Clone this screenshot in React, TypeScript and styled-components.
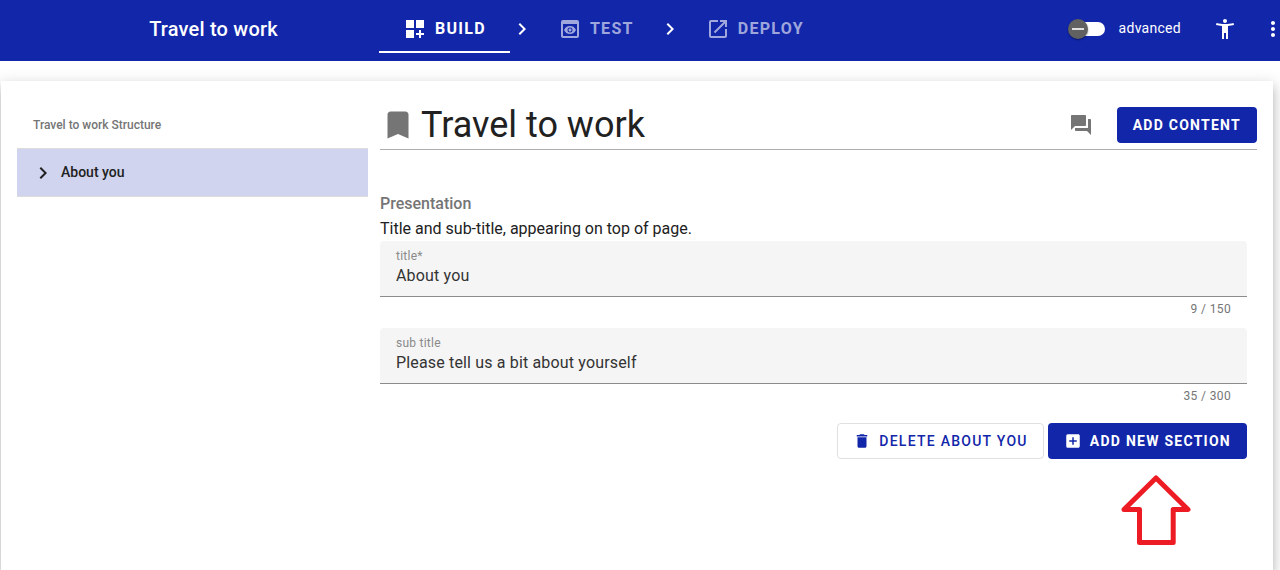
import React, { useState } from "react";
import styled, { createGlobalStyle } from "styled-components";
import {
  MdAccessibilityNew,
  MdAddBox,
  MdBookmark,
  MdChevronRight,
  MdDashboardCustomize,
  MdDelete,
  MdMoreVert,
  MdOpenInNew,
  MdPreview,
  MdQuestionAnswer,
} from "react-icons/md";

const primary = "#1226aa";
const muted = "#757575";

const GlobalStyle = createGlobalStyle`
  *, *::before, *::after { box-sizing: border-box; }
  body {
    margin: 0;
    background: #fff;
    color: #212121;
    font-family: Roboto, "Liberation Sans", sans-serif;
    font-size: 16px;
    line-height: 24px;
  }
  button, input { font-family: inherit; }
`;

const Page = styled.div`
  display: flex;
  flex-direction: column;
  min-height: 100vh;
  overflow: hidden;
`;

const TopBar = styled.header`
  display: flex;
  align-items: center;
  height: 61px;
  margin-right: -17px;
  background: ${primary};
  color: #fff;
`;

const AppTitle = styled.div`
  flex: 0 0 379px;
  padding: 0 0 4px 48px;
  font-size: 20px;
  font-weight: 500;
  letter-spacing: 0.01em;
  text-align: center;
`;

const Stages = styled.nav`
  display: flex;
  flex: 1;
  align-items: center;
  padding-bottom: 4px;
`;

const Stage = styled.button<{ $active?: boolean }>`
  display: flex;
  align-items: center;
  gap: 8px;
  height: 48px;
  margin-top: 1px;
  padding: 0 24px;
  border: 0;
  box-shadow: ${(p) => (p.$active ? "inset 0 -2px #fff" : "none")};
  background: none;
  color: ${(p) => (p.$active ? "#fff" : "rgba(255, 255, 255, 0.6)")};
  font-size: 16px;
  font-weight: 700;
  letter-spacing: 0.08em;
  text-transform: uppercase;
  cursor: pointer;
`;

const StageName = styled.span`
  padding-bottom: 2px;
`;

const SwitchLabel = styled.label`
  display: flex;
  align-items: center;
  gap: 14px;
  padding: 0 20px 5px 0;
  font-size: 14px;
  letter-spacing: 0.02em;
  cursor: pointer;
`;

const Switch = styled.input`
  appearance: none;
  display: flex;
  align-items: center;
  width: 36px;
  height: 14px;
  margin: 2px 0 0;
  border-radius: 7px;
  background: #fff;
  cursor: pointer;

  &::before {
    content: "";
    width: 20px;
    height: 20px;
    margin-left: -1px;
    border-radius: 50%;
    background: linear-gradient(#e0e0e0, #e0e0e0) center / 12px 2px no-repeat #616161;
    box-shadow: 0 1px 2px rgba(0, 0, 0, 0.4);
  }

  &:checked::before {
    margin-left: 17px;
  }
`;

const IconButton = styled.button`
  display: flex;
  align-items: center;
  justify-content: center;
  flex: none;
  width: 48px;
  height: 48px;
  padding: 0;
  border: 0;
  background: none;
  color: inherit;
  cursor: pointer;
`;

const BarActions = styled.div`
  display: flex;
  align-items: center;

  ${IconButton} {
    padding-bottom: 4px;
  }
`;

const Card = styled.main`
  display: grid;
  grid-template-columns: minmax(200px, 351px) minmax(0, 1fr);
  gap: 12px;
  flex: 1;
  margin: 20px 7px 0 1px;
  padding: 16px 16px 24px;
  background: #fff;
  box-shadow:
    0 5px 5px -3px rgba(0, 0, 0, 0.2),
    0 8px 10px 1px rgba(0, 0, 0, 0.14),
    0 3px 14px 2px rgba(0, 0, 0, 0.12);
`;

const StructureTitle = styled.h2`
  margin: 0;
  padding: 16px 16px 11px;
  color: ${muted};
  font-size: 12px;
  font-weight: 500;
`;

const StructureItem = styled.button`
  display: flex;
  align-items: center;
  gap: 6px;
  width: 100%;
  height: 49px;
  padding: 0 14px;
  border: 1px solid #dcdcdc;
  border-width: 1px 0;
  background: #d0d4ee;
  color: #212121;
  font-size: 14px;
  font-weight: 500;
  cursor: pointer;
`;

const ItemName = styled.span`
  padding-bottom: 2px;
`;

const ContentHeader = styled.div`
  display: flex;
  align-items: center;
  padding: 10px 0 6px;
  border-bottom: 1px solid #aeaeae;
`;

const PageTitle = styled.h1`
  display: flex;
  align-items: center;
  flex: 1;
  gap: 5px;
  margin: 0;
  font-size: 36px;
  font-weight: 400;
  line-height: 36px;

  svg {
    color: ${muted};
  }
`;

const HeaderActions = styled.div`
  display: flex;
  align-items: center;
  gap: 12px;
  height: 36px;
  color: ${muted};
`;

const Button = styled.button<{ $outlined?: boolean; $strong?: boolean }>`
  display: flex;
  align-items: center;
  gap: 8px;
  height: 36px;
  padding: 0 ${(p) => (p.$outlined ? "15px" : "16px")};
  border: ${(p) => (p.$outlined ? "1px solid #e0e0e0" : "0")};
  border-radius: 4px;
  background: ${(p) => (p.$outlined ? "#fff" : primary)};
  color: ${(p) => (p.$outlined ? primary : "#fff")};
  font-size: 14px;
  font-weight: ${(p) => (p.$outlined ? 500 : 700)};
  letter-spacing: 0.09em;
  text-transform: uppercase;
  white-space: nowrap;
  cursor: pointer;
`;

const Form = styled.form`
  display: flex;
  flex-direction: column;
  padding: 41px 10px 0 0;
`;

const SectionTitle = styled.h3`
  margin: 0;
  color: ${muted};
  font-size: 16px;
  font-weight: 500;
  line-height: 25px;
`;

const SectionHint = styled.p`
  margin: 0;
  line-height: 25px;
`;

const FieldBox = styled.div`
  display: flex;
  flex-direction: column;
  height: 56px;
  padding: 7px 16px 0;
  border-bottom: 1px solid #8c8c8c;
  border-radius: 4px 4px 0 0;
  background: #f5f5f5;
`;

const FieldLabel = styled.label`
  color: #8a8a8a;
  font-size: 12px;
  line-height: 16px;
  letter-spacing: 0.02em;
`;

const FieldInput = styled.input`
  width: 100%;
  height: 22px;
  padding: 0;
  border: 0;
  outline: 0;
  background: none;
  color: #333;
  font-size: 16px;
  letter-spacing: 0.01em;
`;

const Counter = styled.div`
  height: 31px;
  padding: 0 16px;
  color: ${muted};
  font-size: 12px;
  letter-spacing: 0.03em;
  text-align: right;
`;

const FormActions = styled.div`
  display: flex;
  justify-content: flex-end;
  gap: 4px;
  margin-top: 8px;
`;

const Pointer = styled.svg`
  align-self: flex-end;
  margin: 16px 56px 0 0;
`;

type FieldProps = { id: string; label: string; initial: string; max: number; required?: boolean };

function Field({ id, label, initial, max, required }: FieldProps) {
  const [value, setValue] = useState(initial);
  return (
    <div>
      <FieldBox>
        <FieldLabel htmlFor={id}>{required ? `${label}*` : label}</FieldLabel>
        <FieldInput
          id={id}
          value={value}
          maxLength={max}
          required={required}
          onChange={(e) => setValue(e.target.value)}
        />
      </FieldBox>
      <Counter>{`${value.length} / ${max}`}</Counter>
    </div>
  );
}

export default function App() {
  return (
    <>
      <GlobalStyle />
      <Page>
        <TopBar>
          <AppTitle>Travel to work</AppTitle>
          <Stages>
            <Stage $active>
              <MdDashboardCustomize size={24} />
              <StageName>Build</StageName>
            </Stage>
            <MdChevronRight size={24} />
            <Stage>
              <MdPreview size={24} />
              <StageName>Test</StageName>
            </Stage>
            <MdChevronRight size={24} />
            <Stage>
              <MdOpenInNew size={24} />
              <StageName>Deploy</StageName>
            </Stage>
          </Stages>
          <BarActions>
            <SwitchLabel>
              <Switch type="checkbox" role="switch" />
              advanced
            </SwitchLabel>
            <IconButton aria-label="Accessibility">
              <MdAccessibilityNew size={24} />
            </IconButton>
            <IconButton aria-label="More">
              <MdMoreVert size={24} />
            </IconButton>
          </BarActions>
        </TopBar>
        <Card>
          <aside>
            <StructureTitle>Travel to work Structure</StructureTitle>
            <StructureItem>
              <MdChevronRight size={24} />
              <ItemName>About you</ItemName>
            </StructureItem>
          </aside>
          <section>
            <ContentHeader>
              <PageTitle>
                <MdBookmark size={36} />
                Travel to work
              </PageTitle>
              <HeaderActions>
                <IconButton aria-label="Comments">
                  <MdQuestionAnswer size={24} />
                </IconButton>
                <Button>Add content</Button>
              </HeaderActions>
            </ContentHeader>
            <Form onSubmit={(e) => e.preventDefault()}>
              <SectionTitle>Presentation</SectionTitle>
              <SectionHint>Title and sub-title, appearing on top of page.</SectionHint>
              <Field id="title" label="title" initial="About you" max={150} required />
              <Field id="subtitle" label="sub title" initial="Please tell us a bit about yourself" max={300} />
              <FormActions>
                <Button type="button" $outlined>
                  <MdDelete size={18} />
                  Delete About you
                </Button>
                <Button type="button">
                  <MdAddBox size={18} />
                  Add new section
                </Button>
              </FormActions>
              <Pointer width="70" height="70" viewBox="0 0 70 70" aria-hidden="true">
                <path
                  d="M35 3 67 34.500H52.200V67.500H18.500V34.500H3Z"
                  fill="none"
                  stroke="#ed1c24"
                  strokeWidth="5"
                  strokeLinejoin="round"
                />
              </Pointer>
            </Form>
          </section>
        </Card>
      </Page>
    </>
  );
}
